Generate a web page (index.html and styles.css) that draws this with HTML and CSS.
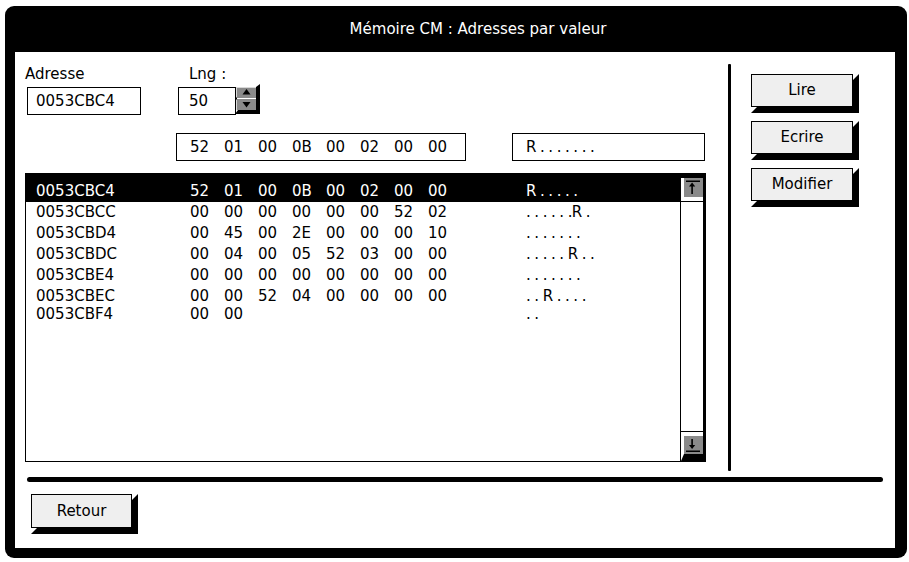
FILE: index.html
```html
<!DOCTYPE html>
<html lang="fr">
<head>
    <meta charset="UTF-8">
    <title>Mémoire CM : Adresses par valeur</title>
    <link rel="stylesheet" href="styles.css">
</head>
<body>
    <div class="window">
        <!-- Barre de titre -->
        <div class="titlebar">Mémoire CM : Adresses par valeur</div>

        <div class="content">
            <div class="top">
                <div class="main">
                    <!-- Adresse et longueur -->
                    <div class="fields">
                        <div class="field">
                            <div class="label">Adresse</div>
                            <div class="box addr-box">0053CBC4</div>
                        </div>
                        <div class="field lng">
                            <div class="label">Lng :</div>
                            <div class="spin">
                                <div class="box lng-box">50</div>
                                <svg class="spin-btns" width="26" height="31" viewBox="0 0 26 31">
                                    <polygon points="21,3 25,0 25,30 0,30 3,26 21,26" fill="#000"/>
                                    <rect x="1" y="3" width="20" height="11" fill="#8a8a8a"/>
                                    <rect x="1" y="3" width="20" height="1" fill="#d8d8d8"/>
                                    <rect x="1" y="3" width="1" height="11" fill="#d8d8d8"/>
                                    <polygon points="11.5,5 15.5,10.5 7.5,10.5" fill="#000"/>
                                    <rect x="1" y="14" width="20" height="1" fill="#fff"/>
                                    <rect x="1" y="15" width="20" height="11" fill="#8a8a8a"/>
                                    <rect x="1" y="15" width="1" height="11" fill="#d8d8d8"/>
                                    <polygon points="7.5,18 15.5,18 11.5,23.5" fill="#000"/>
                                    <rect x="0" y="13.5" width="2" height="2" fill="#000"/>
                                </svg>
                            </div>
                        </div>
                    </div>

                    <!-- Valeur courante -->
                    <div class="preview">
                        <div class="box hex-box">
                            <span class="hex">52</span><span class="hex">01</span><span class="hex">00</span><span class="hex">0B</span><span class="hex">00</span><span class="hex">02</span><span class="hex">00</span><span class="hex">00</span>
                        </div>
                        <div class="box ascii-box"><span class="ascii-text">R . . . . . . .</span></div>
                    </div>

                    <!-- Liste des adresses -->
                    <div class="list">
                        <div class="rows" id="rows"></div>
                        <div class="scrollbar">
                            <svg width="22" height="28" viewBox="0 0 22 28">
                                <rect x="0" y="0" width="22" height="4" fill="#000"/>
                                <rect x="3" y="4" width="19" height="19" fill="#8a8a8a"/>
                                <rect x="5" y="6.5" width="14" height="1.5" fill="#000"/>
                                <rect x="10.3" y="11" width="1.6" height="9" fill="#000"/>
                                <polygon points="11.1,8.5 14.2,12.5 8,12.5" fill="#000"/>
                                <rect x="0" y="27" width="22" height="1" fill="#000"/>
                            </svg>
                            <div class="track"></div>
                            <svg width="22" height="30" viewBox="0 0 22 30">
                                <rect x="0" y="0" width="22" height="1" fill="#000"/>
                                <rect x="3" y="5" width="19" height="18" fill="#8a8a8a"/>
                                <polygon points="0,30 3,23 22,23 22,30" fill="#000"/>
                                <rect x="10.3" y="8" width="1.6" height="8" fill="#000"/>
                                <polygon points="8,14 14.2,14 11.1,18" fill="#000"/>
                                <rect x="5" y="19.5" width="14" height="1.5" fill="#000"/>
                            </svg>
                        </div>
                    </div>
                </div>

                <div class="vsep"></div>

                <!-- Boutons d'action -->
                <div class="side">
                    <div class="btn"><div class="btn-face">Lire</div></div>
                    <div class="btn"><div class="btn-face">Ecrire</div></div>
                    <div class="btn"><div class="btn-face">Modifier</div></div>
                </div>
            </div>

            <div class="hsep"></div>

            <div class="footer">
                <div class="btn"><div class="btn-face tall">Retour</div></div>
            </div>
        </div>
    </div>

    <script>
        const lignes = [
            ['0053CBC4', ['52', '01', '00', '0B', '00', '02', '00', '00'], 'R . . . . .'],
            ['0053CBCC', ['00', '00', '00', '00', '00', '00', '52', '02'], '. . . . . .R .'],
            ['0053CBD4', ['00', '45', '00', '2E', '00', '00', '00', '10'], '. . . . . . .'],
            ['0053CBDC', ['00', '04', '00', '05', '52', '03', '00', '00'], '. . . . . R . .'],
            ['0053CBE4', ['00', '00', '00', '00', '00', '00', '00', '00'], '. . . . . . .'],
            ['0053CBEC', ['00', '00', '52', '04', '00', '00', '00', '00'], '. . R . . . .'],
            ['0053CBF4', ['00', '00'], '. .']
        ];

        const rows = document.getElementById('rows');

        lignes.forEach((ligne, index) => {
            const row = document.createElement('div');
            row.classList.add('row');
            if (index === 0) row.classList.add('selected');
            if (index === lignes.length - 1) row.classList.add('last');

            const hex = ligne[1].map(v => `<span class="hex">${v}</span>`).join('');
            const vides = '<span class="hex"></span>'.repeat(8 - ligne[1].length);

            row.innerHTML = `
                <span class="addr">${ligne[0]}</span>${hex}${vides}
                <span class="ascii-text">${ligne[2]}</span>
            `;
            rows.appendChild(row);
        });
    </script>
</body>
</html>
```

FILE: styles.css
```css
body {
    margin: 0;
    padding: 0;
    background-color: #fff;
    color: #000;
    font-family: "DejaVu Sans", sans-serif;
    font-size: 15px;
}
.window {
    margin: 6px 0 0 5px;
    width: 902px;
    height: 552px;
    box-sizing: border-box;
    padding: 0 12px 10px 10px;
    background-color: #000;
    border-radius: 9px;
}
.titlebar {
    height: 46px;
    line-height: 46px;
    color: #fff;
    text-align: center;
    padding-left: 46px;
}
.content {
    background-color: #fff;
    height: 496px;
}
.top {
    display: flex;
    height: 425px;
}
.main {
    width: 681px;
    padding: 0 22px 0 10px;
}

/* Champs du haut */
.fields {
    display: flex;
    margin-top: 13px;
}
.label {
    line-height: 18px;
    margin-bottom: 4px;
}
.box {
    border: 1px solid #000;
    height: 28px;
    box-sizing: border-box;
    line-height: 26px;
    white-space: nowrap;
}
.addr-box {
    margin-left: 2px;
    width: 114px;
    padding-left: 8px;
}
.lng {
    margin-left: 37px;
}
.lng .label {
    padding-left: 11px;
}
.spin {
    display: flex;
    align-items: flex-start;
}
.lng-box {
    width: 58px;
    padding-left: 10px;
}
.spin-btns {
    margin: -3px 0 0 -1px;
}

/* Valeur courante */
.preview {
    display: flex;
    margin-top: 18px;
}
.hex-box {
    margin-left: 151px;
    width: 290px;
    padding-left: 13px;
    display: flex;
}
.ascii-box {
    margin-left: 46px;
    width: 193px;
    padding-left: 13px;
}
.hex {
    display: inline-block;
    width: 34px;
}
.ascii-text {
    letter-spacing: -0.6px;
    white-space: pre;
}

/* Liste */
.list {
    display: flex;
    margin-top: 12px;
    width: 681px;
    height: 289px;
    box-sizing: border-box;
    border: 1px solid #000;
    border-right: none;
}
.rows {
    flex: 1;
}
.row {
    display: flex;
    height: 21px;
    line-height: 21px;
    padding-left: 10px;
    white-space: nowrap;
}
.row.selected {
    background-color: #000;
    color: #fff;
    padding-top: 7px;
}
.row.last {
    margin-top: -3px;
}
.addr {
    width: 154px;
}
.row .ascii-text {
    margin-left: 64px;
}
.scrollbar {
    width: 22px;
    border-left: 1px solid #000;
    border-right: 3px solid #000;
    display: flex;
    flex-direction: column;
}
.scrollbar svg {
    display: block;
}
.track {
    flex: 1;
}

/* Separateurs */
.vsep {
    width: 3px;
    height: 407px;
    margin-top: 12px;
    background-color: #000;
    border-radius: 1px;
}
.hsep {
    margin-left: 12px;
    width: 856px;
    height: 5px;
    border-radius: 3px;
    background-color: #000;
}

/* Boutons en relief */
.side {
    display: flex;
    flex-direction: column;
    align-items: flex-start;
    gap: 8px;
    padding: 22px 0 0 20px;
}
.btn {
    border-style: solid;
    border-width: 6px;
    border-color: transparent #000 #000 transparent;
    cursor: pointer;
}
.btn-face {
    width: 102px;
    height: 33px;
    box-sizing: border-box;
    margin: -6px 0 0 -6px;
    background-color: #efefef;
    border: 1px solid #000;
    line-height: 31px;
    text-align: center;
}
.btn-face.tall {
    width: 101px;
    height: 34px;
    line-height: 33px;
}
.footer {
    display: flex;
    padding: 12px 0 0 16px;
}
```
